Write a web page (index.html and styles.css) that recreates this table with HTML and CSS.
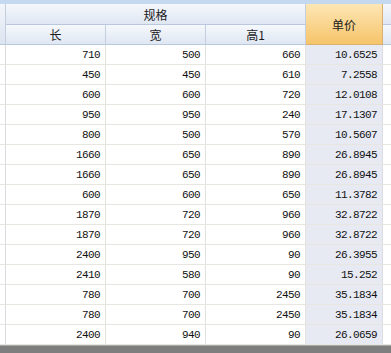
FILE: index.html
```html
<!DOCTYPE html>
<html lang="zh-CN">
<head>
<meta charset="utf-8">
<title>规格</title>
<link rel="stylesheet" href="styles.css">
</head>
<body>
<div class="topband"></div>
<table class="grid">
  <colgroup>
    <col class="c-ind"><col class="c-len"><col class="c-wid"><col class="c-hei"><col class="c-price"><col class="c-rest">
  </colgroup>
  <thead>
    <tr class="h1">
      <th class="ind" rowspan="2"></th>
      <th colspan="3">规格</th>
      <th class="price" rowspan="2">单价</th>
      <th class="rest"></th>
    </tr>
    <tr class="h2">
      <th>长</th>
      <th>宽</th>
      <th>高1</th>
      <th class="rest"></th>
    </tr>
  </thead>
  <tbody>
    <tr><td class="ind"></td><td>710</td><td>500</td><td>660</td><td class="price">10.6525</td><td class="rest"></td></tr>
    <tr><td class="ind"></td><td>450</td><td>450</td><td>610</td><td class="price">7.2558</td><td class="rest"></td></tr>
    <tr><td class="ind"></td><td>600</td><td>600</td><td>720</td><td class="price">12.0108</td><td class="rest"></td></tr>
    <tr><td class="ind"></td><td>950</td><td>950</td><td>240</td><td class="price">17.1307</td><td class="rest"></td></tr>
    <tr><td class="ind"></td><td>800</td><td>500</td><td>570</td><td class="price">10.5607</td><td class="rest"></td></tr>
    <tr><td class="ind"></td><td>1660</td><td>650</td><td>890</td><td class="price">26.8945</td><td class="rest"></td></tr>
    <tr><td class="ind"></td><td>1660</td><td>650</td><td>890</td><td class="price">26.8945</td><td class="rest"></td></tr>
    <tr><td class="ind"></td><td>600</td><td>600</td><td>650</td><td class="price">11.3782</td><td class="rest"></td></tr>
    <tr><td class="ind"></td><td>1870</td><td>720</td><td>960</td><td class="price">32.8722</td><td class="rest"></td></tr>
    <tr><td class="ind"></td><td>1870</td><td>720</td><td>960</td><td class="price">32.8722</td><td class="rest"></td></tr>
    <tr><td class="ind"></td><td>2400</td><td>950</td><td>90</td><td class="price">26.3955</td><td class="rest"></td></tr>
    <tr><td class="ind"></td><td>2410</td><td>580</td><td>90</td><td class="price">15.252</td><td class="rest"></td></tr>
    <tr><td class="ind"></td><td>780</td><td>700</td><td>2450</td><td class="price">35.1834</td><td class="rest"></td></tr>
    <tr><td class="ind"></td><td>780</td><td>700</td><td>2450</td><td class="price">35.1834</td><td class="rest"></td></tr>
    <tr><td class="ind"></td><td>2400</td><td>940</td><td>90</td><td class="price">26.0659</td><td class="rest"></td></tr>
  </tbody>
</table>
<div class="bottombar"></div>
</body>
</html>
```

FILE: styles.css
```css
html, body {
  margin: 0;
  padding: 0;
  background: #ffffff;
  width: 391px;
  height: 353px;
  overflow: hidden;
}

.topband {
  height: 4px;
  background: #c4d8f0;
}

.grid {
  border-collapse: separate;
  border-spacing: 0;
  table-layout: fixed;
  width: 391px;
}

.c-ind { width: 6px; }
.c-len { width: 100px; }
.c-wid { width: 100px; }
.c-hei { width: 100px; }
.c-price { width: 77px; }
.c-rest { width: 8px; }

.grid th {
  box-sizing: border-box;
  padding: 0;
  font-family: "Noto Sans CJK SC", "Noto Sans", sans-serif;
  font-weight: normal;
  font-size: 12px;
  color: #1a1a1a;
  text-align: center;
  background: linear-gradient(#f5f8fc, #dfe7f3);
  border-right: 1px solid #c3cfdf;
  border-bottom: 1px solid #b9c8dc;
  overflow: hidden;
  white-space: nowrap;
}

.grid .h1 th { height: 21px; }
.grid .h2 th { height: 20px; }

.grid th.ind {
  background: linear-gradient(#f3f6fb, #dde5f1);
  border-right: 1px solid #c3cfdf;
}

.grid th.price {
  background: linear-gradient(#fde6b5, #f6c46a);
  border-right: 1px solid #d9b070;
  border-bottom: 1px solid #d9b070;
  padding-top: 1px;
}

.grid th.rest { border-right: 0; }

.grid td {
  box-sizing: border-box;
  height: 20px;
  padding: 0 5px 0 0;
  font-family: "Liberation Mono", "DejaVu Sans Mono", monospace;
  font-size: 11px;
  letter-spacing: -0.6px;
  color: #111111;
  text-align: right;
  border-right: 1px solid #e3e1db;
  border-bottom: 1px solid #e8e6e0;
  white-space: nowrap;
  overflow: hidden;
}

.grid td.ind {
  padding: 0;
  border-right: 1px solid #dadbde;
}

.grid td.price {
  background: #e7e9f3;
  border-right: 1px solid #dcdde3;
}

.grid td.rest {
  padding: 0;
  border-right: 0;
}

.bottombar {
  height: 8px;
  background: #7e7e7e;
  border-top: 1px solid #a8a8a8;
}
```
